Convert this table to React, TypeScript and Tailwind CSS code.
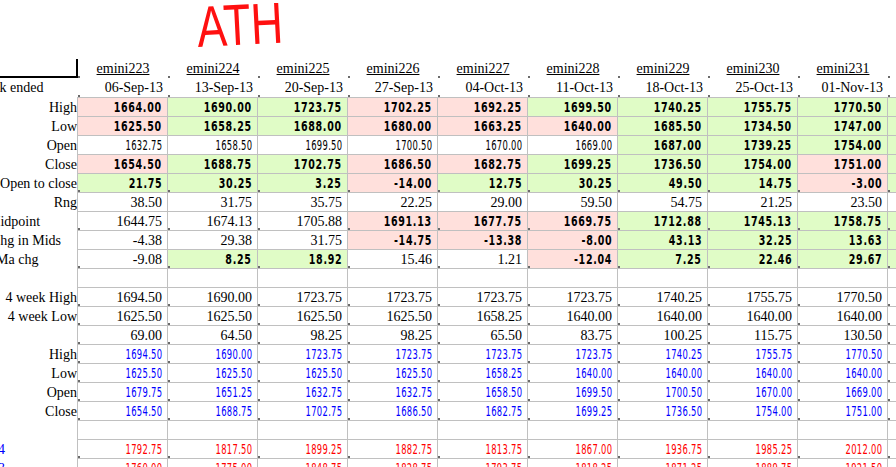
import React from "react";

type Kind = "t" | "n" | "blue" | "red" | "none";

type Row = {
  label: string;
  align: "right" | "left";
  shift?: string;
  labelColor?: string;
  values: string[];
  fills: string;
  kind: Kind;
  dot?: boolean;
};

const headers = ["emini223", "emini224", "emini225", "emini226", "emini227", "emini228", "emini229", "emini230", "emini231"];
const dates = ["06-Sep-13", "13-Sep-13", "20-Sep-13", "27-Sep-13", "04-Oct-13", "11-Oct-13", "18-Oct-13", "25-Oct-13", "01-Nov-13"];

const blank = ["", "", "", "", "", "", "", "", ""];

const rows: Row[] = [
  { label: "High", align: "right", kind: "n", fills: "PGGPPGGGGG", values: ["1664.00", "1690.00", "1723.75", "1702.25", "1692.25", "1699.50", "1740.25", "1755.75", "1770.50"] },
  { label: "Low", align: "right", kind: "n", fills: "PGGPPPGGGG", values: ["1625.50", "1658.25", "1688.00", "1680.00", "1663.25", "1640.00", "1685.50", "1734.50", "1747.00"] },
  { label: "Open", align: "right", kind: "n", fills: "WWWWWWGGGG", values: ["1632.75", "1658.50", "1699.50", "1700.50", "1670.00", "1669.00", "1687.00", "1739.25", "1754.00"] },
  { label: "Close", align: "right", kind: "n", fills: "PGGPPGGGPG", values: ["1654.50", "1688.75", "1702.75", "1686.50", "1682.75", "1699.25", "1736.50", "1754.00", "1751.00"] },
  { label: "Open to close", align: "right", kind: "n", dot: true, fills: "GGGPGGGGPG", values: ["21.75", "30.25", "3.25", "-14.00", "12.75", "30.25", "49.50", "14.75", "-3.00"] },
  { label: "Rng", align: "right", kind: "t", fills: "WWWWWWWWWW", values: ["38.50", "31.75", "35.75", "22.25", "29.00", "59.50", "54.75", "21.25", "23.50"] },
  { label: "Midpoint", align: "left", shift: "ml-[-12px]", kind: "t", dot: true, fills: "WWWPPPGGGG", values: ["1644.75", "1674.13", "1705.88", "1691.13", "1677.75", "1669.75", "1712.88", "1745.13", "1758.75"] },
  { label: "Chg in Mids", align: "left", shift: "ml-[-9px]", kind: "t", fills: "WWWPPPGGGG", values: ["-4.38", "29.38", "31.75", "-14.75", "-13.38", "-8.00", "43.13", "32.25", "13.63"] },
  { label: "Ma chg", align: "left", shift: "ml-[-4px]", kind: "t", dot: true, fills: "WGGWWPGGGG", values: ["-9.08", "8.25", "18.92", "15.46", "1.21", "-12.04", "7.25", "22.46", "29.67"] },
  { label: "", align: "right", kind: "none", fills: "WWWWWWWWWW", values: blank },
  { label: "4 week High", align: "right", kind: "t", dot: true, fills: "WWWWWWWWWW", values: ["1694.50", "1690.00", "1723.75", "1723.75", "1723.75", "1723.75", "1740.25", "1755.75", "1770.50"] },
  { label: "4 week Low", align: "right", kind: "t", dot: true, fills: "WWWWWWWWWW", values: ["1625.50", "1625.50", "1625.50", "1625.50", "1658.25", "1640.00", "1640.00", "1640.00", "1640.00"] },
  { label: "", align: "right", kind: "t", dot: true, fills: "WWWWWWWWWW", values: ["69.00", "64.50", "98.25", "98.25", "65.50", "83.75", "100.25", "115.75", "130.50"] },
  { label: "High", align: "right", kind: "blue", dot: true, fills: "WWWWWWWWWW", values: ["1694.50", "1690.00", "1723.75", "1723.75", "1723.75", "1723.75", "1740.25", "1755.75", "1770.50"] },
  { label: "Low", align: "right", kind: "blue", dot: true, fills: "WWWWWWWWWW", values: ["1625.50", "1625.50", "1625.50", "1625.50", "1658.25", "1640.00", "1640.00", "1640.00", "1640.00"] },
  { label: "Open", align: "right", kind: "blue", dot: true, fills: "WWWWWWWWWW", values: ["1679.75", "1651.25", "1632.75", "1632.75", "1658.50", "1699.50", "1700.50", "1670.00", "1669.00"] },
  { label: "Close", align: "right", kind: "blue", dot: true, fills: "WWWWWWWWWW", values: ["1654.50", "1688.75", "1702.75", "1686.50", "1682.75", "1699.25", "1736.50", "1754.00", "1751.00"] },
  { label: "", align: "right", kind: "none", fills: "WWWWWWWWWW", values: blank },
  { label: "4", align: "left", shift: "ml-[-2px]", labelColor: "text-[#0000ff]", kind: "red", dot: true, fills: "WWWWWWWWWW", values: ["1792.75", "1817.50", "1899.25", "1882.75", "1813.75", "1867.00", "1936.75", "1985.25", "2012.00"] },
  { label: "3", align: "left", shift: "ml-[-2px]", labelColor: "text-[#0000ff]", kind: "red", dot: true, fills: "WWWWWWWWWW", values: ["1760.00", "1775.00", "1848.75", "1828.75", "1793.75", "1818.25", "1871.25", "1889.75", "1921.50"] },
];

const Dot = () => <span className="absolute left-0 bottom-0 w-[2px] h-[2px] bg-[#6b6b6b]" />;

function Value({ value, fill, kind }: { value: string; fill: string; kind: Kind }) {
  if (!value) return null;
  if (fill !== "W") {
    return (
      <span className="inline-block origin-right scale-x-[0.68] font-['DejaVu_Sans',sans-serif] font-bold text-[14px] tracking-[1px] leading-none">
        {value}
      </span>
    );
  }
  if (kind === "t") return <span>{value}</span>;
  const color = kind === "blue" ? "text-[#0000ff]" : kind === "red" ? "text-[#ff0000]" : "text-black";
  return (
    <span className={`inline-block origin-right scale-x-[0.6] font-['DejaVu_Sans',sans-serif] font-normal text-[14px] tracking-[0.5px] leading-none ${color}`}>
      {value}
    </span>
  );
}

function DataRow({ row, first }: { row: Row; first: boolean }) {
  const height = first ? "h-[20px] border-t" : "h-[19px]";
  return (
    <div className="flex">
      <div
        className={`w-[78px] shrink-0 overflow-hidden whitespace-nowrap border-r border-[#c0c0c0] flex items-center ${first ? "h-[20px] pt-px" : "h-[19px]"} ${
          row.align === "right" ? "justify-end" : "justify-start"
        } ${row.labelColor ?? ""}`}
      >
        <span className={row.shift ?? ""}>{row.label}</span>
      </div>
      {Array.from({ length: 10 }).map((_, i) => {
        const fill = row.fills[i];
        const bg = fill === "P" ? "bg-[#ffe0dc]" : fill === "G" ? "bg-[#e0fcc6]" : "bg-white";
        return (
          <div
            key={i}
            className={`relative w-[90px] shrink-0 ${height} border-r border-b border-[#c0c0c0] ${bg} flex items-center justify-end pr-[5px] whitespace-nowrap`}
          >
            <Value value={row.values[i] ?? ""} fill={fill} kind={row.kind} />
            {row.dot && <Dot />}
          </div>
        );
      })}
    </div>
  );
}

export default function App() {
  return (
    <div className="w-[896px] h-[467px] overflow-hidden bg-white text-black font-['Liberation_Serif',serif] text-[14px]">
      <div className="h-[59px] pl-[197px] overflow-hidden">
        <span className="inline-block origin-left scale-x-[0.77] -rotate-[3deg] font-['Liberation_Sans',sans-serif] text-[58px] leading-none text-[#ff1010] mt-[-2px]">
          ATH
        </span>
      </div>

      <div className="flex h-[19px]">
        <div className="w-[78px] shrink-0 border-r-2 border-b-2 border-black" />
        {headers.map((h) => (
          <div key={h} className="relative w-[90px] shrink-0 flex items-center justify-center underline">
            {h}
            <Dot />
          </div>
        ))}
        <div className="relative w-[90px] shrink-0">
          <Dot />
        </div>
      </div>

      <div className="flex h-[19px]">
        <div className="w-[78px] shrink-0 overflow-hidden whitespace-nowrap flex items-center">
          <span className="ml-[-25px]">Week ended</span>
        </div>
        {dates.map((d) => (
          <div key={d} className="relative w-[90px] shrink-0 flex items-center justify-end pr-[5px]">
            {d}
            <Dot />
          </div>
        ))}
        <div className="relative w-[90px] shrink-0">
          <Dot />
        </div>
      </div>

      {rows.map((row, i) => (
        <DataRow key={i} row={row} first={i === 0} />
      ))}
    </div>
  );
}
